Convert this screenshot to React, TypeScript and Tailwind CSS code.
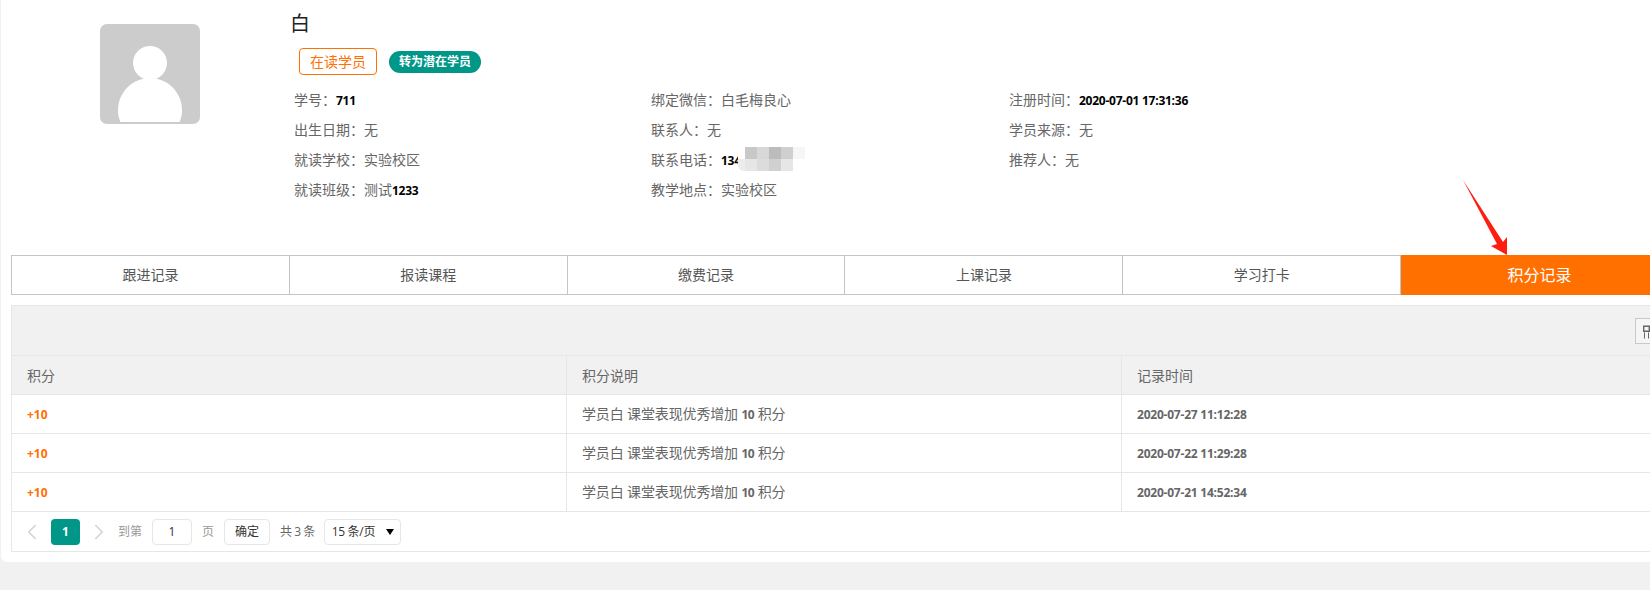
import { ChevronLeft, ChevronRight } from "lucide-react";

const cjk = "font-['Open_Sans','Noto_Sans_CJK_SC',sans-serif]";

const infoRows = [
  [
    ["学号：", "711"],
    ["绑定微信：", "白毛梅良心"],
    ["注册时间：", "2020-07-01 17:31:36"],
  ],
  [
    ["出生日期：", "无"],
    ["联系人：", "无"],
    ["学员来源：", "无"],
  ],
  [
    ["就读学校：", "实验校区"],
    ["联系电话：", "134"],
    ["推荐人：", "无"],
  ],
  [
    ["就读班级：", "测试1233"],
    ["教学地点：", "实验校区"],
    ["", ""],
  ],
];

const tabs = ["跟进记录", "报读课程", "缴费记录", "上课记录", "学习打卡", "积分记录"];

const records = ["2020-07-27 11:12:28", "2020-07-22 11:29:28", "2020-07-21 14:52:34"];

const mosaic = [
  "bg-white",
  "bg-[#c8c8c8]",
  "bg-[#d8d8d8]",
  "bg-[#bcbcbc]",
  "bg-[#cfcfcf]",
  "bg-[#f6f6f6]",
  "rounded-bl-md bg-[#ececec]",
  "bg-[#e6e6e6]",
  "bg-[#dcdcdc]",
  "bg-[#d0d0d0]",
  "bg-[#e6e6e6]",
  "bg-white",
];

// digits in the source render heavier than the CJK text
function Mixed({ text }: { text: string }) {
  return (
    <>
      {text.split(/(\d[\d\-: ]*\d|\d)/).map((part, i) =>
        /\d/.test(part) ? (
          <span key={i} className="text-[12px] font-bold tracking-[-0.25px] text-black">
            {part}
          </span>
        ) : (
          <span key={i}>{part}</span>
        ),
      )}
    </>
  );
}

function Avatar() {
  return (
    <div className="h-[100px] w-[100px] overflow-hidden rounded-[7px] bg-[#cccccc]">
      <svg viewBox="0 0 100 100" className="h-full w-full">
        <circle cx="50" cy="39" r="17" fill="#fff" />
        <path d="M20.3 98 A32 32 0 1 1 79.7 98 Z" fill="#fff" />
      </svg>
    </div>
  );
}

function Arrow() {
  return (
    <svg
      viewBox="0 0 60 90"
      className="absolute left-[1458px] top-[175px] z-10 h-[90px] w-[60px]"
    >
      <path d="M5 5 L45 67 L49 62 L49 80 L33 71 L39 69 Z" fill="#fe1e10" />
    </svg>
  );
}

export default function App() {
  return (
    <div className={`relative h-[590px] overflow-hidden bg-[#f1f1f1] ${cjk}`}>
      <Arrow />
      <div className="ml-px h-[562px] w-[1700px] rounded-b-md bg-white pl-[10px]">
        <div className="flex h-[255px] items-start">
          <div className="ml-[89px] mt-6">
            <Avatar />
          </div>
          <div className="ml-[90px] pt-[9px]">
            <h1 className="text-[20px] leading-[30px] text-[#222]">白</h1>
            <div className="mt-[9px] flex items-center">
              <span className="ml-[9px] flex h-[27px] w-[78px] items-center justify-center rounded-[4px] border border-[#ff7000] text-[14px] text-[#ff7000]">
                在读学员
              </span>
              <span className="ml-3 flex h-[22px] w-[92px] items-center justify-center rounded-full bg-[#009688] text-[12px] font-bold text-white">
                转为潜在学员
              </span>
            </div>
            <div className="ml-1 mt-[9px] text-[14px] text-[#666]">
              {infoRows.map((row, r) => (
                <div key={r} className="flex h-[30px] items-center">
                  {row.map(([label, value], c) => (
                    <div
                      key={c}
                      className={`relative whitespace-pre ${c === 0 ? "w-[357px]" : "w-[358px]"}`}
                    >
                      {label}
                      <Mixed text={value} />
                      {label === "联系电话：" && (
                        <div className="absolute left-[87px] top-[-2px] grid grid-cols-[7px_repeat(5,12px)]">
                          {mosaic.map((color, i) => (
                            <span key={i} className={`h-3 ${color}`} />
                          ))}
                        </div>
                      )}
                    </div>
                  ))}
                </div>
              ))}
            </div>
          </div>
        </div>

        <div className="flex h-10 w-[1668px] border border-[#c4c4c4]">
          {tabs.map((tab, i) =>
            i === tabs.length - 1 ? (
              <div
                key={tab}
                className="-my-px flex flex-1 items-center justify-center bg-[#ff7000] text-[16px] text-white"
              >
                {tab}
              </div>
            ) : (
              <div
                key={tab}
                className="flex flex-1 items-center justify-center border-r border-[#c4c4c4] pb-[2px] text-[14px] text-[#555]"
              >
                {tab}
              </div>
            ),
          )}
        </div>

        <div className="mt-[10px] w-[1668px] border border-[#e6e6e6] text-[14px]">
          <div className="flex h-[50px] items-center justify-end border-b border-[#e6e6e6] bg-[#f1f1f1] pr-[17px]">
            <div className="flex h-[26px] w-[26px] items-center justify-center border border-[#c9c9c9] bg-[#f5f5f5]">
              <svg viewBox="0 0 16 16" className="h-4 w-4 text-[#666]">
                <path d="M3.7 3.2h5.6v5H3.7z" fill="none" stroke="currentColor" strokeWidth="1.4" />
                <path d="M4.5 9.5v6 M8.5 9.5v6" fill="none" stroke="currentColor" strokeWidth="1" />
              </svg>
            </div>
          </div>
          <div className="grid h-[39px] grid-cols-[555px_555px_1fr] items-stretch border-b border-[#e6e6e6] bg-[#f1f1f1] text-[#666]">
            <div className="flex items-center border-r border-[#e6e6e6] pl-[15px]">积分</div>
            <div className="flex items-center border-r border-[#e6e6e6] pl-[15px]">积分说明</div>
            <div className="flex items-center pl-[15px]">记录时间</div>
          </div>
          {records.map((time) => (
            <div
              key={time}
              className="grid h-[39px] grid-cols-[555px_555px_1fr] border-b border-[#e6e6e6] text-[#666]"
            >
              <div className="flex items-center border-r border-[#e6e6e6] pl-[15px] pt-[2px] text-[12px] font-bold text-[#ff7000]">
                +10
              </div>
              <div className="flex items-center border-r border-[#e6e6e6] pb-[2px] pl-[15px]">
                <p className="whitespace-pre tracking-[-0.14px]">
                  学员白 课堂表现优秀增加 <span className="text-[12px] font-bold tracking-[-0.5px]">10</span> 积分
                </p>
              </div>
              <div className="flex items-center pl-[15px] pt-[2px] text-[12px] font-bold tracking-[-0.22px]">{time}</div>
            </div>
          ))}
          <div className="flex h-[39px] items-center pl-[7px] text-[12px]">
            <ChevronLeft className="h-[26px] w-[26px] text-[#d2d2d2]" strokeWidth={1.4} />
            <span className="ml-[6px] flex h-[26px] w-[29px] items-center justify-center rounded-sm bg-[#009688] font-bold text-white">
              1
            </span>
            <ChevronRight className="ml-[6px] h-[26px] w-[26px] text-[#d2d2d2]" strokeWidth={1.4} />
            <span className="ml-[6px] text-[#999]">到第</span>
            <span className="ml-[10px] flex h-[26px] w-10 items-center justify-center rounded-sm border border-[#e6e6e6] text-[#333]">
              1
            </span>
            <span className="ml-[10px] text-[#999]">页</span>
            <span className="ml-[10px] flex h-[26px] w-[46px] items-center justify-center rounded-sm border border-[#e6e6e6] text-[#333]">
              确定
            </span>
            <span className="ml-[10px] tracking-[-0.5px] text-[#666]">共 3 条</span>
            <span className="ml-[9px] flex h-[26px] w-[77px] items-center justify-between rounded-sm border border-[#e6e6e6] pl-[7px] pr-[6px] tracking-[-0.3px] text-[#333]">
              15 条/页
              <span className="h-0 w-0 border-x-[4px] border-t-[6px] border-x-transparent border-t-black" />
            </span>
          </div>
        </div>
      </div>
    </div>
  );
}
